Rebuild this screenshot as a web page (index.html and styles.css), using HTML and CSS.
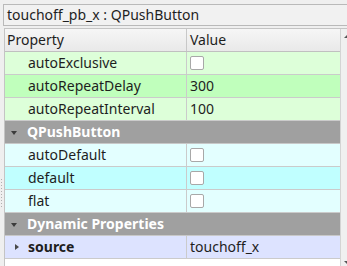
FILE: index.html
```html
<!DOCTYPE html>
<html>
<head>
<meta charset="utf-8">
<link rel="stylesheet" href="styles.css">
</head>
<body>
<div class="window">
  <div class="grip"></div>
  <div class="panel">
    <div class="title">touchoff_pb_x : QPushButton</div>
    <div class="tree">
      <div class="table">
        <div class="row header">
          <div class="cell name">Property</div>
          <div class="cell value">Value</div>
        </div>
        <div class="row green-light">
          <div class="cell name prop">autoExclusive</div>
          <div class="cell value"><span class="check"></span></div>
        </div>
        <div class="row green-dark">
          <div class="cell name prop">autoRepeatDelay</div>
          <div class="cell value">300</div>
        </div>
        <div class="row green-light">
          <div class="cell name prop">autoRepeatInterval</div>
          <div class="cell value">100</div>
        </div>
        <div class="row category">
          <span class="arrow-down"></span>QPushButton
        </div>
        <div class="row cyan-light">
          <div class="cell name prop">autoDefault</div>
          <div class="cell value"><span class="check"></span></div>
        </div>
        <div class="row cyan-dark">
          <div class="cell name prop">default</div>
          <div class="cell value"><span class="check"></span></div>
        </div>
        <div class="row cyan-light">
          <div class="cell name prop">flat</div>
          <div class="cell value"><span class="check"></span></div>
        </div>
        <div class="row category">
          <span class="arrow-down"></span>Dynamic Properties
        </div>
        <div class="row blue">
          <div class="cell name prop bold"><span class="arrow-right"></span>source</div>
          <div class="cell value">touchoff_x</div>
        </div>
        <div class="filler"></div>
      </div>
      <div class="scrollbar">
        <span class="sb-up"></span>
        <span class="sb-down"></span>
      </div>
    </div>
  </div>
</div>
</body>
</html>
```

FILE: styles.css
```css
* { box-sizing: border-box; }
html, body {
  margin: 0;
  padding: 0;
  width: 347px;
  height: 266px;
  overflow: hidden;
  background: #efefef;
  font-family: "Noto Sans", "Open Sans", sans-serif;
  font-size: 14px;
  color: #1e1e1e;
}
.window {
  display: flex;
  height: 266px;
}
.grip {
  width: 3px;
  flex: none;
  background-image: radial-gradient(circle, #b0b0b0 0.6px, transparent 0.8px);
  background-size: 3px 3px;
  background-repeat: repeat-y;
  height: 30px;
  margin-top: 178px;
}
.panel {
  flex: 1;
  display: flex;
  flex-direction: column;
  min-width: 0;
}
.title {
  margin-top: 4px;
  height: 22px;
  border: 1px solid #b9b9b9;
  border-right: none;
  background: #f1f1f1;
  padding-left: 3px;
  line-height: 20px;
  white-space: nowrap;
}
.tree {
  margin-top: 2px;
  margin-left: 1px;
  display: flex;
  flex: 1;
  width: 360px;
  border-top: 1px solid #c4c4c4;
  border-left: 1px solid #c4c4c4;
  background: #ffffff;
}
.table {
  width: 335px;
  flex: none;
  display: flex;
  flex-direction: column;
}
.row {
  display: flex;
  height: 23px;
  border-bottom: 1px solid #cbcbcb;
  line-height: 22px;
  white-space: nowrap;
}
.cell.name {
  width: 182px;
  border-right: 1px solid #cbcbcb;
  padding-left: 2px;
}
.cell.prop { padding-left: 23px; }
.cell.value {
  flex: 1;
  padding-left: 3px;
  display: flex;
  align-items: center;
}
.header {
  background: linear-gradient(#f6f6f6, #e9e9e9);
  border-bottom-color: #c0c0c0;
}
.header .cell.name { border-right-color: #c8c8c8; }
.green-light { background: #ddffd9; }
.green-dark { background: #c0ffbc; }
.cyan-light { background: #e3ffff; }
.cyan-dark { background: #c0ffff; }
.blue { background: #dde3ff; }
.category {
  background: #a0a0a0;
  color: #ffffff;
  font-weight: bold;
  padding-left: 6px;
  align-items: center;
  border-bottom-color: #c8c8c8;
}
.arrow-down {
  display: inline-block;
  width: 0;
  height: 0;
  border-left: 3.5px solid transparent;
  border-right: 3.5px solid transparent;
  border-top: 4px solid #3c3c3c;
  margin-right: 10px;
  margin-top: 1px;
}
.bold { font-weight: bold; position: relative; }
.arrow-right {
  position: absolute;
  left: 10px;
  top: 8px;
  width: 0;
  height: 0;
  border-top: 3.5px solid transparent;
  border-bottom: 3.5px solid transparent;
  border-left: 4px solid #4a4a4a;
}
.check {
  display: inline-block;
  width: 14px;
  height: 14px;
  border: 1px solid #a8a8a8;
  border-radius: 2px;
  background: #ffffff;
}
.filler { flex: 1; background: #ffffff; }
.scrollbar {
  width: 16px;
  flex: none;
  border-left: 1px solid #d4d4d4;
  background: #f0f0f0;
  position: relative;
}
.sb-up {
  position: absolute;
  left: 3px;
  top: 5px;
  width: 0;
  height: 0;
  border-left: 4px solid transparent;
  border-right: 4px solid transparent;
  border-bottom: 4px solid #555;
}
.sb-down {
  position: absolute;
  left: 3px;
  top: 232px;
  width: 0;
  height: 0;
  border-left: 4px solid transparent;
  border-right: 4px solid transparent;
  border-top: 4px solid #555;
}
```
